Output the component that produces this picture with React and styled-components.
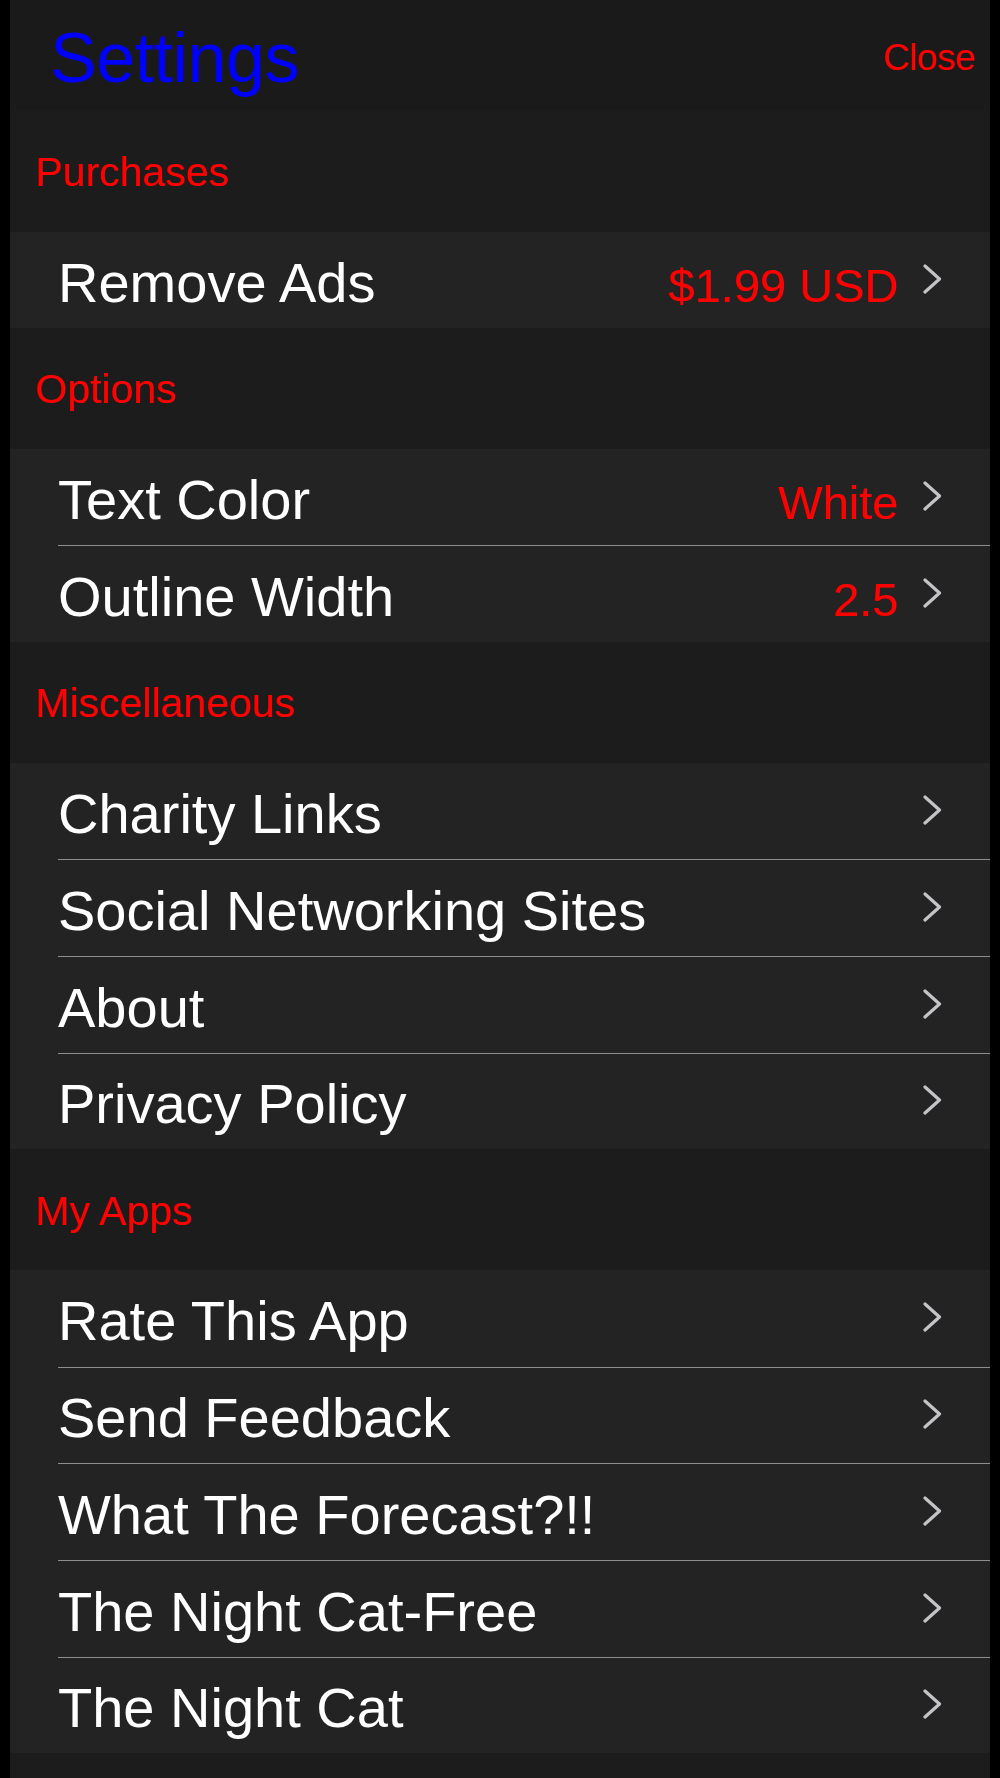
import React from 'react';
import styled, {createGlobalStyle, css} from 'styled-components';

const GlobalStyle = createGlobalStyle`
  html, body {
    margin: 0;
    padding: 0;
    background: #000;
  }
  * { box-sizing: border-box; }
`;

const thinText = css`
  font-family: "Liberation Sans", Arial, sans-serif;
  font-weight: 400;
`;

const Screen = styled.div`
  ${thinText};
  margin: 0 10px;
  min-height: 100vh;
  background: #1c1c1c;
  padding-bottom: 25px;
`;

const Header = styled.div`
  height: 111px;
  display: flex;
  align-items: center;
  justify-content: space-between;
  padding: 4px 15px 0 40px;
  background: #1a1a1a;
`;

const Title = styled.div`
  font-size: 70px;
  color: #0000ff;
  letter-spacing: -0.5px;
`;

const CloseBtn = styled.div`
  font-size: 37px;
  color: #ff0000;
  letter-spacing: -0.5px;
`;

const SectionTitle = styled.div`
  height: 120.5px;
  display: flex;
  align-items: center;
  padding: 3px 0 0 25px;
  font-size: 41px;
  color: #ff0000;
`;

const Group = styled.div`
  background: #232323;
`;

const Row = styled.div`
  height: 96.7px;
  padding-left: 48px;
  display: flex;
`;

const RowBody = styled.div`
  flex: 1;
  display: flex;
  align-items: center;
  padding: 5px 48px 0 0;
  border-top: ${p => (p.$first ? 'none' : '1px solid #8e8e8e')};
`;

const Texts = styled.div`
  flex: 1;
  display: flex;
  align-items: baseline;
  justify-content: space-between;
  margin-right: 25px;
  white-space: nowrap;
`;

const Label = styled.span`
  font-size: 56px;
  color: #fff;
`;

const Value = styled.span`
  font-size: 47px;
  color: #ff0000;
`;

const ChevronBox = styled.div`
  display: flex;
  margin-bottom: 7px;
`;

const Chevron = () => (
  <ChevronBox>
    <svg width="19" height="30" viewBox="0 0 19 30">
      <polyline points="2,2 16.5,15 2,28" fill="none" stroke="#c4c4c8" strokeWidth="3.2" strokeLinecap="round" strokeLinejoin="round"/>
    </svg>
  </ChevronBox>
);

const sections = [
  {title: 'Purchases', rows: [{label: 'Remove Ads', value: '$1.99 USD'}]},
  {title: 'Options', rows: [
    {label: 'Text Color', value: 'White'},
    {label: 'Outline Width', value: '2.5'},
  ]},
  {title: 'Miscellaneous', rows: [
    {label: 'Charity Links'},
    {label: 'Social Networking Sites'},
    {label: 'About'},
    {label: 'Privacy Policy'},
  ]},
  {title: 'My Apps', rows: [
    {label: 'Rate This App'},
    {label: 'Send Feedback'},
    {label: 'What The Forecast?!!'},
    {label: 'The Night Cat-Free'},
    {label: 'The Night Cat'},
  ]},
];

export default function App() {
  return (
    <>
      <GlobalStyle/>
      <Screen>
        <Header>
          <Title>Settings</Title>
          <CloseBtn>Close</CloseBtn>
        </Header>
        {sections.map(sec => (
          <React.Fragment key={sec.title}>
            <SectionTitle>{sec.title}</SectionTitle>
            <Group>
              {sec.rows.map((r, i) => (
                <Row key={r.label}>
                  <RowBody $first={i === 0}>
                    <Texts>
                      <Label>{r.label}</Label>
                      {r.value && <Value>{r.value}</Value>}
                    </Texts>
                    <Chevron/>
                  </RowBody>
                </Row>
              ))}
            </Group>
          </React.Fragment>
        ))}
      </Screen>
    </>
  );
}
